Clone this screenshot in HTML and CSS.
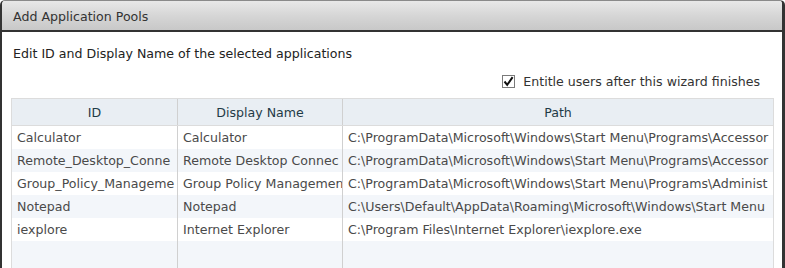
FILE: index.html
```html
<!DOCTYPE html>
<html>
<head>
<meta charset="utf-8">
<link rel="stylesheet" href="styles.css">
</head>
<body>
<div class="window">
  <div class="titlebar">Add Application Pools</div>
  <div class="content">
    <div class="subtitle">Edit ID and Display Name of the selected applications</div>
    <div class="options">
      <label class="check">
        <span class="box"><svg width="11" height="11" viewBox="0 0 11 11"><path d="M1.5 5.5 L4.2 8.8 L9.6 1.2" fill="none" stroke="#111" stroke-width="2"/></svg></span>
        <span>Entitle users after this wizard finishes</span>
      </label>
    </div>
    <div class="grid">
      <div class="row head">
        <div class="c c1">ID</div>
        <div class="c c2">Display Name</div>
        <div class="c c3">Path</div>
      </div>
      <div class="row">
        <div class="c c1">Calculator</div>
        <div class="c c2">Calculator</div>
        <div class="c c3">C:\ProgramData\Microsoft\Windows\Start Menu\Programs\Accessor</div>
      </div>
      <div class="row alt">
        <div class="c c1">Remote_Desktop_Conne</div>
        <div class="c c2">Remote Desktop Connec</div>
        <div class="c c3">C:\ProgramData\Microsoft\Windows\Start Menu\Programs\Accessor</div>
      </div>
      <div class="row">
        <div class="c c1">Group_Policy_Manageme</div>
        <div class="c c2">Group Policy Managemen</div>
        <div class="c c3">C:\ProgramData\Microsoft\Windows\Start Menu\Programs\Administ</div>
      </div>
      <div class="row alt">
        <div class="c c1">Notepad</div>
        <div class="c c2">Notepad</div>
        <div class="c c3">C:\Users\Default\AppData\Roaming\Microsoft\Windows\Start Menu</div>
      </div>
      <div class="row">
        <div class="c c1">iexplore</div>
        <div class="c c2">Internet Explorer</div>
        <div class="c c3">C:\Program Files\Internet Explorer\iexplore.exe</div>
      </div>
      <div class="row alt empty">
        <div class="c c1"></div>
        <div class="c c2"></div>
        <div class="c c3"></div>
      </div>
    </div>
  </div>
</div>
</body>
</html>
```

FILE: styles.css
```css
html, body {
  margin: 0;
  padding: 0;
  background: #ffffff;
  overflow: hidden;
}
body {
  font-family: "DejaVu Sans", Verdana, sans-serif;
  font-size: 12.6px;
  color: #222;
}
.window {
  width: 785px;
  height: 268px;
  box-sizing: border-box;
  border-left: 2px solid #333;
  border-right: 3px solid #333;
  border-top: 1px solid #8a8a8a;
  border-radius: 5px 5px 0 0;
  background: #fff;
  overflow: hidden;
}
.titlebar {
  height: 31px;
  box-sizing: border-box;
  border-bottom: 2px solid #333;
  background: linear-gradient(#e8e8e8, #d6d6d6 50%, #c8c8c8);
  padding-left: 11px;
  padding-top: 1px;
  line-height: 29px;
  color: #333;
}
.content {
  padding: 0 8px 0 9px;
}
.subtitle {
  padding-top: 14px;
  padding-left: 2px;
  line-height: 16px;
  color: #222;
}
.options {
  display: flex;
  justify-content: flex-end;
  padding-top: 10px;
  padding-right: 14px;
  height: 18px;
}
.check {
  display: flex;
  align-items: center;
  gap: 8px;
  color: #333;
}
.box {
  width: 11px;
  height: 11px;
  border: 1px solid #7a7a7a;
  background: #fff;
  display: flex;
  align-items: center;
  justify-content: center;
}
.grid {
  margin-top: 8px;
  border: 1px solid #dcdcdc;
  border-bottom: none;
  width: 763px;
  box-sizing: border-box;
  font-size: 12.6px;
}
.row {
  display: flex;
  height: 23px;
  background: #fff;
}
.row.alt {
  background: #f3f6fa;
}
.row.head {
  height: 26px;
  background: #e9eef3;
  border-bottom: 1px solid #dcdcdc;
}
.row.head .c {
  justify-content: center;
  padding-left: 0;
  color: #1f3b47;
}
.row.empty {
  height: 30px;
}
.c {
  display: flex;
  align-items: center;
  padding-left: 5px;
  white-space: nowrap;
  overflow: hidden;
  box-sizing: border-box;
  color: #4a4a4a;
}
.c1 {
  width: 166px;
  border-right: 1px solid #d0d0d0;
}
.c2 {
  width: 165px;
  border-right: 1px solid #d0d0d0;
}
.c3 {
  flex: 1;
}
```
